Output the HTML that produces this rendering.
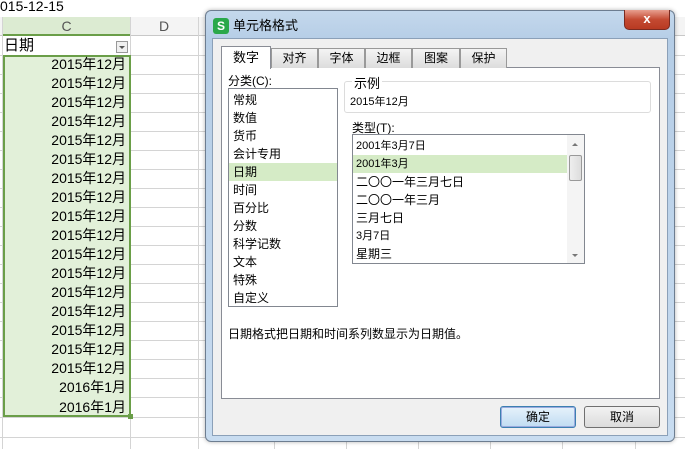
<!DOCTYPE html>
<html><head><meta charset="utf-8"><style>
*{margin:0;padding:0;box-sizing:border-box}
body{width:685px;height:449px;overflow:hidden;background:#fff;font-family:"Liberation Sans","Noto Sans CJK SC",sans-serif;position:relative;font-size:12px;color:#000}
.a{position:absolute}
.hl{position:absolute;left:0;width:685px;height:1px;background:#d4d4d4}
.vl{position:absolute;top:17px;width:1px;height:432px;background:#d4d4d4}
.cell{position:absolute;left:4px;width:124px;height:19px;text-align:right;font-size:14px;line-height:19px;padding-right:2px}
.cat div{height:18px;line-height:18px;padding-left:4px;font-size:12px}
.typ div{height:18px;line-height:18px;padding-left:3px;font-size:11px}
.tab{position:absolute;top:48px;height:20px;border:1px solid #999;border-bottom:none;background:linear-gradient(#f4f4f4,#dcdcdc);text-align:center;line-height:19px;font-size:12px}
.btn{position:absolute;top:406px;width:76px;height:22px;border:1px solid #707070;border-radius:3px;background:linear-gradient(#f2f2f2,#dcdcdc);text-align:center;line-height:20px;font-size:12px}
</style></head><body>
<div class="a" style="left:0;top:-2px;font-size:14px;">015-12-15</div>
<div class="a" style="left:0;top:17px;width:685px;height:19px;background:#f4f4f4;border-bottom:1px solid #c8c8c8"></div>
<div class="a" style="left:3px;top:17px;width:127px;height:19px;background:#dcebd2;border-bottom:2px solid #6a9e48;text-align:center;font-size:14px;color:#555;line-height:19px">C</div>
<div class="a" style="left:130px;top:17px;width:68px;height:19px;text-align:center;font-size:14px;color:#555;line-height:19px">D</div>
<div class="hl" style="top:55px"></div>
<div class="hl" style="top:74px"></div><div class="hl" style="top:93px"></div><div class="hl" style="top:112px"></div><div class="hl" style="top:131px"></div><div class="hl" style="top:150px"></div><div class="hl" style="top:169px"></div><div class="hl" style="top:188px"></div><div class="hl" style="top:207px"></div><div class="hl" style="top:226px"></div><div class="hl" style="top:245px"></div><div class="hl" style="top:264px"></div><div class="hl" style="top:283px"></div><div class="hl" style="top:302px"></div><div class="hl" style="top:321px"></div><div class="hl" style="top:340px"></div><div class="hl" style="top:359px"></div><div class="hl" style="top:378px"></div><div class="hl" style="top:397px"></div><div class="hl" style="top:417px"></div><div class="hl" style="top:437px"></div>
<div class="vl" style="left:2px"></div><div class="vl" style="left:130px"></div><div class="vl" style="left:198px"></div><div class="vl" style="left:274px"></div><div class="vl" style="left:346px"></div><div class="vl" style="left:418px"></div><div class="vl" style="left:490px"></div><div class="vl" style="left:562px"></div><div class="vl" style="left:635px"></div>
<div class="a" style="left:4px;top:37px;font-size:15px;line-height:18px">日期</div>
<div class="a" style="left:116px;top:41px;width:12px;height:12px;border:1px solid #999;background:#f0f0f0"><div class="a" style="left:2px;top:4px;border-left:3px solid transparent;border-right:3px solid transparent;border-top:3px solid #555"></div></div>
<div class="a" style="left:3px;top:55px;width:128px;height:362px;background:#e2f0d9;border:2px solid #6a9e48"></div>
<div class="a" style="left:128px;top:414px;width:5px;height:5px;background:#6a9e48"></div>
<div class="cell" style="top:55px">2015年12月</div><div class="cell" style="top:74px">2015年12月</div><div class="cell" style="top:93px">2015年12月</div><div class="cell" style="top:112px">2015年12月</div><div class="cell" style="top:131px">2015年12月</div><div class="cell" style="top:150px">2015年12月</div><div class="cell" style="top:169px">2015年12月</div><div class="cell" style="top:188px">2015年12月</div><div class="cell" style="top:207px">2015年12月</div><div class="cell" style="top:226px">2015年12月</div><div class="cell" style="top:245px">2015年12月</div><div class="cell" style="top:264px">2015年12月</div><div class="cell" style="top:283px">2015年12月</div><div class="cell" style="top:302px">2015年12月</div><div class="cell" style="top:321px">2015年12月</div><div class="cell" style="top:340px">2015年12月</div><div class="cell" style="top:359px">2015年12月</div><div class="cell" style="top:378px">2016年1月</div><div class="cell" style="top:398px">2016年1月</div>

<!-- dialog -->
<div class="a" style="left:205px;top:10px;width:470px;height:432px;border:1px solid #6d7d90;border-radius:6px;background:linear-gradient(#c4d8ec,#b5cde6 30px,#c8dcf0);box-shadow:0 0 4px rgba(0,0,0,.3)"></div>
<div class="a" style="left:213px;top:18px;width:16px;height:16px;background:#2aa84a;border-radius:3px;color:#fff;font-size:12px;font-weight:bold;text-align:center;line-height:16px">S</div>
<div class="a" style="left:233px;top:17px;font-size:13px;line-height:18px">单元格格式</div>
<div class="a" style="left:624px;top:10px;width:46px;height:20px;border:1px solid #7a2a20;border-top:none;border-radius:0 0 5px 5px;background:linear-gradient(#e8a090,#c44a32 50%,#b83a22);color:#fff;font-weight:bold;text-align:center;line-height:18px;font-size:13px">x</div>
<div class="a" style="left:212px;top:38px;width:456px;height:398px;background:#f0f0f0;border:1px solid #8ba0b8"></div>
<div class="a" style="left:221px;top:67px;width:439px;height:332px;background:#fff;border:1px solid #898c95"></div>
<div class="tab" style="left:271px;width:47px">对齐</div>
<div class="tab" style="left:318px;width:47px">字体</div>
<div class="tab" style="left:365px;width:47px">边框</div>
<div class="tab" style="left:412px;width:48px">图案</div>
<div class="tab" style="left:460px;width:47px">保护</div>
<div class="tab" style="left:221px;top:46px;width:50px;height:23px;background:#fff;border-color:#898c95;line-height:22px;font-size:13px">数字</div>
<div class="a" style="left:228px;top:72px;font-size:12px">分类(C):</div>
<div class="a cat" style="left:228px;top:88px;width:110px;height:219px;border:1px solid #828790;padding-top:2px">
<div>常规</div><div>数值</div><div>货币</div><div>会计专用</div><div style="background:#d5ebc6">日期</div><div>时间</div><div>百分比</div><div>分数</div><div>科学记数</div><div>文本</div><div>特殊</div><div>自定义</div></div>
<div class="a" style="left:344px;top:81px;width:307px;height:32px;border:1px solid #dcdcdc;border-radius:3px"></div>
<div class="a" style="left:352px;top:73px;background:#fff;padding:0 2px;font-size:13px">示例</div>
<div class="a" style="left:350px;top:93px;font-size:11px">2015年12月</div>
<div class="a" style="left:352px;top:119px;font-size:12px">类型(T):</div>
<div class="a typ" style="left:352px;top:134px;width:233px;height:130px;border:1px solid #828790;padding-top:2px">
<div>2001年3月7日</div><div style="background:#d5ebc6;margin-right:17px">2001年3月</div><div style="font-size:12px">二〇〇一年三月七日</div><div style="font-size:12px">二〇〇一年三月</div><div style="font-size:12px">三月七日</div><div>3月7日</div><div style="font-size:12px">星期三</div></div>
<div class="a" style="left:567px;top:135px;width:17px;height:128px;background:#f4f4f4"></div>
<div class="a" style="left:569px;top:155px;width:13px;height:26px;border:1px solid #999;border-radius:2px;background:linear-gradient(90deg,#eee,#ddd)"></div>
<div class="a" style="left:572px;top:143px;border-left:3px solid transparent;border-right:3px solid transparent;border-bottom:3px solid #777"></div>
<div class="a" style="left:572px;top:254px;border-left:3px solid transparent;border-right:3px solid transparent;border-top:3px solid #777"></div>
<div class="a" style="left:228px;top:325px;font-size:12px">日期格式把日期和时间系列数显示为日期值。</div>
<div class="btn" style="left:500px;border-color:#3c7fb1;background:linear-gradient(#e6f2fb,#c0dcf2);box-shadow:inset 0 0 0 1px #9ad">确定</div>
<div class="btn" style="left:584px">取消</div>
</body></html>
